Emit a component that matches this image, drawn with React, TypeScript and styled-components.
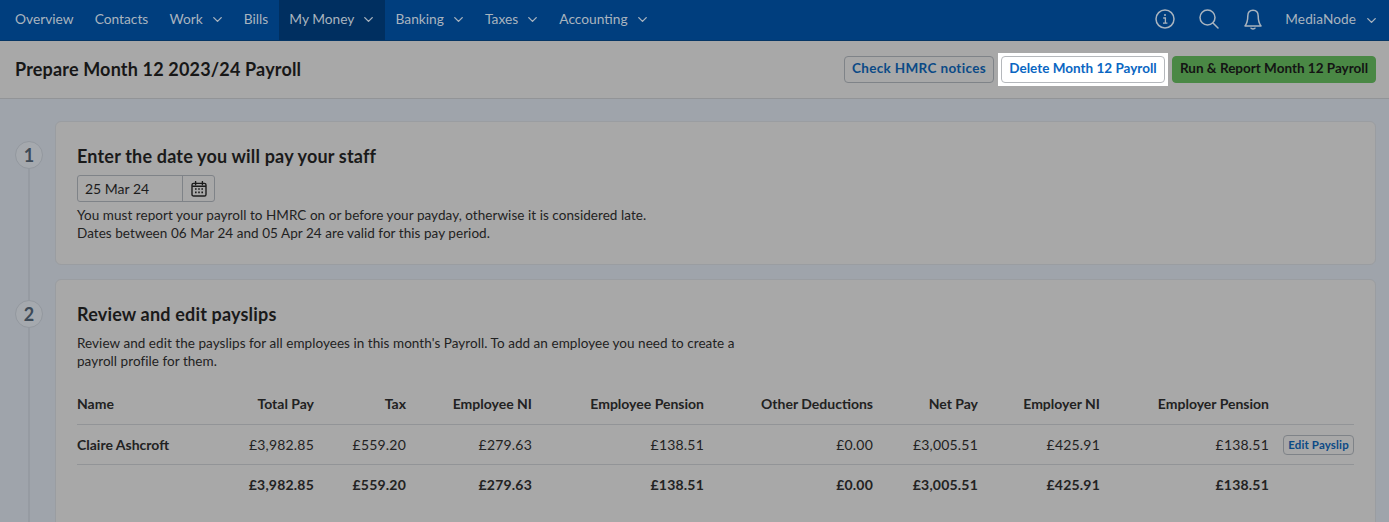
import React from 'react';
import styled, { createGlobalStyle } from 'styled-components';
import { ChevronDown } from 'lucide-react';

const GlobalStyle = createGlobalStyle`
  html, body {
    margin: 0;
    height: 100%;
    overflow: hidden;
    background: #9fa4ab;
    font-family: 'Lato', 'Liberation Sans', sans-serif;
    color: #1c1c1c;
  }
`;

const Page = styled.div`
  display: flex;
  flex-direction: column;
  height: 100vh;
  overflow: hidden;
`;

const Nav = styled.nav`
  flex-shrink: 0;
  display: flex;
  align-items: stretch;
  justify-content: space-between;
  height: 41px;
  padding-left: 4.5px;
  background: #003e7e;
  border-bottom: 1px solid #063665;
  box-sizing: border-box;
`;

const NavGroup = styled.div`
  display: flex;
  align-items: stretch;
`;

const NavItem = styled.a<{ $active?: boolean }>`
  display: flex;
  align-items: center;
  gap: 7px;
  padding: 0 10.55px 4px;
  font-size: 13.75px;
  color: #a9b4bf;
  background: ${p => (p.$active ? '#002f60' : 'transparent')};
`;

const Chevron = styled(ChevronDown).attrs({ size: 15, strokeWidth: 2.2 })`
  margin: 3px -2px 0 0;
`;

const NavIcons = styled.div`
  display: flex;
  align-items: center;
  gap: 24px;
  padding: 0 12px 2px 0;
  color: #a9b4bf;
`;

const NavUser = styled.span`
  display: flex;
  align-items: center;
  gap: 8px;
  margin-left: -2px;
  font-size: 13.6px;
  letter-spacing: 0.1px;
`;

const Toolbar = styled.header`
  flex-shrink: 0;
  display: flex;
  align-items: center;
  justify-content: space-between;
  height: 58px;
  padding: 0 13px 0 15px;
  box-sizing: border-box;
  background: #a8a8a8;
  border-bottom: 1px solid #929497;
`;

const PageTitle = styled.h1`
  margin: 0 0 2px;
  font-size: 18px;
  font-weight: 700;
  letter-spacing: 0.17px;
  color: #171717;
`;

const Actions = styled.div`
  display: flex;
  align-items: center;
  gap: 4px;
`;

const Spotlight = styled.div`
  display: flex;
  padding: 3px;
  background: #fff;
`;

const Button = styled.button<{ $variant?: 'ghost' | 'light' | 'green' }>`
  height: 27px;
  padding: 0 0 3px;
  width: ${p => (p.$variant === 'green' ? 204 : p.$variant === 'light' ? 164 : 150)}px;
  box-sizing: border-box;
  white-space: nowrap;
  font-family: inherit;
  font-weight: 700;
  font-size: 13.5px;
  letter-spacing: ${p => (p.$variant === 'ghost' ? 0.35 : 0)}px;
  border-radius: 4px;
  border: 1px solid ${p => (p.$variant === 'green' ? '#4a8845' : p.$variant === 'light' ? '#b5b8bc' : '#7f8388')};
  background: ${p => (p.$variant === 'green' ? '#4a8845' : p.$variant === 'light' ? '#fff' : 'transparent')};
  color: ${p => (p.$variant === 'green' ? '#141414' : p.$variant === 'light' ? '#0a66c2' : '#0b4a86')};
`;

const EditButton = styled.button`
  width: 71px;
  height: 20px;
  padding: 0;
  box-sizing: border-box;
  white-space: nowrap;
  font-family: inherit;
  font-weight: 700;
  font-size: 11.5px;
  letter-spacing: 0.15px;
  border-radius: 4px;
  border: 1px solid #7f8388;
  background: transparent;
  color: #0b4a86;
`;

const Steps = styled.main`
  flex: 1;
  min-height: 0;
  overflow: hidden;
  padding: 22px 13px 0 15px;
`;

const Step = styled.section`
  display: grid;
  grid-template-columns: 28px 1fr;
  column-gap: 12px;
`;

const Rail = styled.div`
  display: flex;
  flex-direction: column;
  align-items: center;
`;

const RailLine = styled.div<{ $hidden?: boolean; $top?: number }>`
  width: 2px;
  background: ${p => (p.$hidden ? 'transparent' : '#969ba2')};
  ${p => (p.$top ? `height: ${p.$top}px;` : 'flex: 1;')}
`;

const StepNumber = styled.div`
  display: flex;
  align-items: center;
  justify-content: center;
  width: 28px;
  height: 28px;
  box-sizing: border-box;
  border-radius: 50%;
  border: 1px solid #93989f;
  background: #a5a9ae;
  font-size: 18px;
  font-weight: 700;
  color: #3d4a57;
`;

const Card = styled.div<{ $height?: number }>`
  margin-bottom: 14px;
  padding: 24px 21px 40px;
  box-sizing: border-box;
  ${p => p.$height && `height: ${p.$height}px;`}
  background: #a8a8a8;
  border: 1px solid #9a9da1;
  border-radius: 6px;
`;

const CardTitle = styled.h2`
  margin: 0 0 8px;
  font-size: 18px;
  line-height: 21px;
  font-weight: 700;
  letter-spacing: 0.18px;
  color: #1a1a1a;
`;

const DateField = styled.div`
  display: flex;
  width: 138px;
  height: 27px;
  box-sizing: border-box;
  border: 1px solid #7f8388;
  border-radius: 3px;
  overflow: hidden;
`;

const DateValue = styled.div`
  display: flex;
  align-items: center;
  width: 105px;
  padding-left: 7px;
  box-sizing: border-box;
  font-size: 14px;
  border-right: 1px solid #7f8388;
`;

const DateButton = styled.div`
  display: flex;
  align-items: center;
  justify-content: center;
  flex: 1;
  color: #1c1c1c;
`;

const Copy = styled.p<{ $width?: number; $gap: number }>`
  margin: ${p => p.$gap}px 0 0;
  font-size: 13.5px;
  line-height: 18px;
  letter-spacing: 0.05px;
  color: #222;
  ${p => p.$width && `max-width: ${p.$width}px;`}
`;

const Row = styled.div<{ $bold?: boolean; $line?: boolean; $spacing?: number }>`
  display: grid;
  grid-template-columns: 120px 117px 92px 126px 172px 169px 105px 122px 169px 85px;
  align-items: center;
  height: 40px;
  box-sizing: border-box;
  padding-bottom: ${p => (p.$bold ? 2 : 0)}px;
  font-size: 14px;
  letter-spacing: ${p => p.$spacing ?? 0.2}px;
  font-weight: ${p => (p.$bold ? 700 : 400)};
  color: #222;
  ${p => p.$line && 'border-bottom: 1px solid #929497;'}
`;

const NameCell = styled.div`
  font-weight: 700;
  letter-spacing: 0;
  white-space: nowrap;
`;

const Cell = styled.div`
  text-align: right;
  white-space: nowrap;
`;

const ActionCell = styled.div`
  display: flex;
  justify-content: flex-end;
`;

const Table = styled.div`
  margin-top: 15px;
`;

const InfoIcon = () => (
  <svg width="20" height="20" viewBox="0 0 20 20" fill="none" stroke="currentColor">
    <circle cx="10" cy="10" r="9" strokeWidth="1.5" />
    <circle cx="10" cy="6" r="1" fill="currentColor" stroke="none" />
    <path d="M8.2 9h2.2v5M8 14.2h4.4" strokeWidth="1.3" />
  </svg>
);

const SearchIcon = () => (
  <svg width="20" height="20" viewBox="0 0 20 20" fill="none" stroke="currentColor" strokeWidth="1.5">
    <circle cx="8.5" cy="8.5" r="7.5" />
    <path d="M14 14l5 5" strokeLinecap="round" />
  </svg>
);

const BellIcon = () => (
  <svg width="20" height="21" viewBox="0 0 20 21" fill="none" stroke="currentColor" strokeWidth="1.5">
    <path d="M10 1.2c-3.4 0-5.2 2.6-5.2 5.8 0 4.6-.5 7-2.8 10h16c-2.3-3-2.8-5.4-2.8-10 0-3.2-1.8-5.8-5.2-5.8z" strokeLinejoin="round" />
    <path d="M8 19.2c.6 1 3.4 1 4 0" strokeLinecap="round" />
  </svg>
);

const CalendarIcon = () => (
  <svg width="16" height="16" viewBox="0 0 16 16" fill="none" stroke="currentColor" strokeWidth="1.4">
    <rect x="1" y="2.4" width="14" height="12.6" rx="1.6" />
    <path d="M1 5.2h14" />
    <path d="M4.6 .6v3.2M11.4 .6v3.2" strokeLinecap="round" />
    <path d="M4 8h1.6M7.2 8h1.6M10.4 8h1.6M4 11.4h1.6M7.2 11.4h1.6M10.4 11.4h1.6" strokeWidth="1.7" />
  </svg>
);

const headers = ['Total Pay', 'Tax', 'Employee NI', 'Employee Pension', 'Other Deductions', 'Net Pay', 'Employer NI', 'Employer Pension'];
const values = ['£3,982.85', '£559.20', '£279.63', '£138.51', '£0.00', '£3,005.51', '£425.91', '£138.51'];

export default function App() {
  return (
    <Page>
      <GlobalStyle />
      <Nav>
        <NavGroup>
          <NavItem>Overview</NavItem>
          <NavItem>Contacts</NavItem>
          <NavItem>Work <Chevron /></NavItem>
          <NavItem>Bills</NavItem>
          <NavItem $active>My Money <Chevron /></NavItem>
          <NavItem>Banking <Chevron /></NavItem>
          <NavItem>Taxes <Chevron /></NavItem>
          <NavItem>Accounting <Chevron /></NavItem>
        </NavGroup>
        <NavIcons>
          <InfoIcon />
          <SearchIcon />
          <BellIcon />
          <NavUser>MediaNode <Chevron /></NavUser>
        </NavIcons>
      </Nav>

      <Toolbar>
        <PageTitle>Prepare Month 12 2023/24 Payroll</PageTitle>
        <Actions>
          <Button $variant="ghost">Check HMRC notices</Button>
          <Spotlight>
            <Button $variant="light">Delete Month 12 Payroll</Button>
          </Spotlight>
          <Button $variant="green">Run &amp; Report Month 12 Payroll</Button>
        </Actions>
      </Toolbar>

      <Steps>
        <Step>
          <Rail>
            <RailLine $top={20} $hidden />
            <StepNumber>1</StepNumber>
            <RailLine />
          </Rail>
          <Card $height={144}>
            <CardTitle>Enter the date you will pay your staff</CardTitle>
            <DateField>
              <DateValue>25 Mar 24</DateValue>
              <DateButton><CalendarIcon /></DateButton>
            </DateField>
            <Copy $gap={4}>
              You must report your payroll to HMRC on or before your payday, otherwise it is considered late.<br />
              Dates between 06 Mar 24 and 05 Apr 24 are valid for this pay period.
            </Copy>
          </Card>
        </Step>
        <Step>
          <Rail>
            <RailLine $top={21} />
            <StepNumber>2</StepNumber>
            <RailLine />
          </Rail>
          <Card>
            <CardTitle>Review and edit payslips</CardTitle>
            <Copy $gap={9} $width={680}>
              Review and edit the payslips for all employees in this month's Payroll. To add an employee you need to create a payroll profile for them.
            </Copy>
            <Table>
              <Row $bold $line $spacing={0}>
                <NameCell>Name</NameCell>
                {headers.map(h => <Cell key={h}>{h}</Cell>)}
                <div />
              </Row>
              <Row $line>
                <NameCell>Claire Ashcroft</NameCell>
                {values.map((v, i) => <Cell key={i}>{v}</Cell>)}
                <ActionCell><EditButton>Edit Payslip</EditButton></ActionCell>
              </Row>
              <Row $bold>
                <div />
                {values.map((v, i) => <Cell key={i}>{v}</Cell>)}
                <div />
              </Row>
            </Table>
          </Card>
        </Step>
      </Steps>
    </Page>
  );
}
